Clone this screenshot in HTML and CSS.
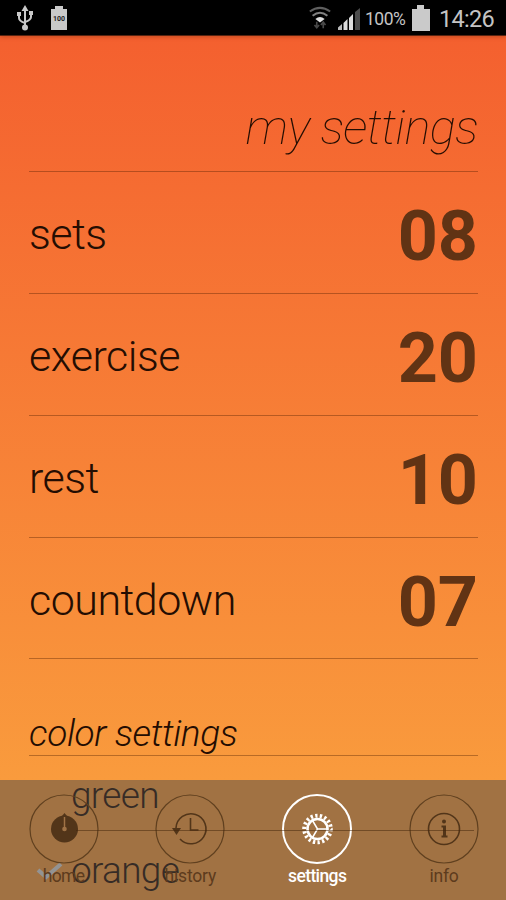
FILE: index.html
```html
<!DOCTYPE html>
<html lang="en">
<head>
<meta charset="utf-8">
<title>My settings</title>
<link rel="stylesheet" href="styles.css">
</head>
<body>
<div class="phone">
  <header class="status">
    <svg class="usb" width="18" height="26" viewBox="0 0 18 26" fill="none" stroke="#c9c9c9" stroke-width="2">
      <path d="M9 3v19M3 9v4q0 3 6 5M15 8v4q0 3-6 5"/>
      <path d="M5.500 6 9 0l3.500 6zM1 7h4v4H1zM13 6h4v4h-4z" fill="#c9c9c9" stroke="none"/>
      <circle cx="9" cy="22.500" r="3" fill="#c9c9c9" stroke="none"/>
    </svg>
    <span class="charge">100</span>
    <div class="status-right">
      <svg class="wifi" width="24" height="26" viewBox="0 0 26 26" fill="none" stroke="#5f5f5f" stroke-width="2.200">
        <path d="M2 6q11-8 22 0"/><path d="M5 10.500q8-6.500 16 0" stroke="#808080"/>
        <path d="M8 14q5-4 10 0l-5 4z" fill="#ddd" stroke="none"/>
        <path d="M9.500 17v6M7 20.500l2.500 3 2.500-3M16.500 24v-6M14 20.500l2.500-3 2.500 3" stroke="#484848" stroke-width="1.800"/>
      </svg>
      <svg class="signal" width="24" height="24" viewBox="0 0 24 24" fill="#ddd">
        <path d="M1 20.500 5 17v6H1z" fill="#bbb"/><path d="M6.500 16l4-4v11h-4zM12 11l4-4v16h-4z"/><path d="M18 5l5-4v22h-5z" fill="#4b4b4b"/>
      </svg>
      <span class="percent">100%</span>
      <svg class="battery" width="18" height="26" viewBox="0 0 18 26"><path d="M0 4h5V0h7v4h6v22H0z" fill="#cacaca"/></svg>
      <span class="clock">14:26</span>
    </div>
  </header>

  <main class="content">
    <h1>my settings</h1>
    <div class="row"><span class="label">sets</span><span class="value">08</span></div>
    <div class="row"><span class="label">exercise</span><span class="value">20</span></div>
    <div class="row"><span class="label">rest</span><span class="value">10</span></div>
    <div class="row last"><span class="label">countdown</span><span class="value">07</span></div>
    <h2>color settings</h2>
    <ul class="colors">
      <li>green</li>
      <li class="checked">
        <svg class="check" width="28" height="20" viewBox="0 0 28 20"><path d="M2 8l8 7L25 2" fill="none" stroke="#ddd" stroke-width="4"/></svg>orange</li>
    </ul>
  </main>

  <nav class="tabs">
    <a class="tab home">
      <svg viewBox="0 0 72 72"><circle class="ring" cx="36" cy="36" r="34"/>
        <circle cx="36.500" cy="36" r="13.500" fill="#523519"/><path d="M34 23l2.500-3 2.500 3z" fill="#523519"/>
        <path d="M36.500 24v12" stroke="#a07346" stroke-width="1.500"/><circle cx="36.500" cy="36" r="2.300" fill="#a07346"/></svg>
      <span>home</span>
    </a>
    <a class="tab">
      <svg viewBox="0 0 72 72"><circle class="ring" cx="36" cy="36" r="34"/>
        <path class="line" d="M22 35a15 15 0 1 1 4 11M36.500 25v12h8"/><path d="M18 35h9l-4.500 7z" fill="#523519"/></svg>
      <span>history</span>
    </a>
    <a class="tab active">
      <svg viewBox="0 0 72 72"><circle class="ring" cx="36" cy="36" r="34"/>
        <circle class="teeth" cx="36.500" cy="36" r="13.300" pathLength="72"/>
        <circle class="wheel" cx="36.500" cy="36" r="10"/>
        <path class="line" d="M36.500 36H46M36.500 36l-5-8.500M36.500 36l-5 8.500"/></svg>
      <span>settings</span>
    </a>
    <a class="tab">
      <svg viewBox="0 0 72 72"><circle class="ring" cx="36" cy="36" r="34"/>
        <circle class="line" cx="36" cy="36" r="15.500"/><circle cx="36" cy="28.500" r="2" fill="#523519"/>
        <path d="M33.500 32.500h4.500v10h1.500v2h-6v-2H35v-8h-1.500z" fill="#523519"/></svg>
      <span>info</span>
    </a>
  </nav>
</div>
</body>
</html>
```
FILE: styles.css
```css
* { box-sizing: border-box; }
body { margin: 0; background: #000; font-family: Roboto, "Liberation Sans", sans-serif; }
.phone {
  position: relative;
  width: 506px;
  height: 900px;
  overflow: hidden;
  background: linear-gradient(#f4602f 36px, #f99b3d 780px);
  color: #240d02;
}
.status {
  display: flex;
  align-items: center;
  height: 36px;
  padding: 0 12px 0 16px;
  background: #000;
  border-bottom: 1px solid #5a2410;
  box-shadow: 0 1px 4px rgba(120, 40, 10, 0.4);
  color: #c4c4c4;
}
.charge {
  position: relative;
  width: 16px;
  height: 21px;
  margin: 3px 0 0 17px;
  background: #c9c9c9;
  color: #222;
  font-size: 7px;
  font-weight: 700;
  line-height: 20px;
  text-align: center;
}
.charge::before {
  content: "";
  position: absolute;
  left: 4px;
  top: -3px;
  width: 8px;
  height: 3px;
  background: #c9c9c9;
}
.status-right { display: flex; align-items: center; margin-left: auto; }
.wifi { margin-right: 5px; }
.signal { margin: 2px 4px 0 0; }
.percent { width: 42px; margin: 2px 5px 0 0; font-size: 17.5px; letter-spacing: -0.5px; white-space: nowrap; }
.battery { margin-right: 9px; }
.clock { margin-top: 2px; font-size: 23.5px; width: 55px; letter-spacing: -0.7px; }
.content { padding: 0 28px 0 29px; }
h1, h2 { margin: 0; border-bottom: 1px solid rgba(80, 30, 0, 0.38); font-style: italic; }
h1 {
  height: 136px;
  padding-top: 62px;
  font-size: 49px;
  font-weight: 100;
  line-height: 60px;
  letter-spacing: -0.7px;
  text-align: right;
}
.row {
  display: flex;
  justify-content: space-between;
  height: 122px;
  padding-top: 20px;
  border-bottom: 1px solid rgba(80, 30, 0, 0.38);
  line-height: 84px;
}
.row.last { height: 121px; }
.label { font-size: 43px; font-weight: 300; letter-spacing: -0.5px; }
.value { padding-top: 2px; font-size: 70px; font-weight: 700; color: #613314; }
h2 {
  height: 97px;
  padding-top: 52px;
  font-size: 37px;
  font-weight: 300;
  line-height: 46px;
  letter-spacing: -0.35px;
}
.colors { margin: 0; padding: 2px 0 0 42px; list-style: none; font-size: 37px; font-weight: 300; line-height: 76px; letter-spacing: -0.7px; }
.colors li { position: relative; height: 75px; }
.check { position: absolute; left: -35px; top: 29px; }
.tabs {
  position: absolute;
  left: 0;
  right: 0;
  bottom: 0;
  height: 120px;
  display: flex;
  justify-content: space-between;
  padding: 12.5px 26px 0 27.5px;
  background: rgba(73, 73, 73, 0.5);
}
.tabs::before {
  content: "";
  position: absolute;
  left: 76px;
  right: 32px;
  top: 50px;
  height: 1px;
  background: rgba(65, 35, 10, 0.5);
}
.tab { display: flex; flex-direction: column; align-items: center; width: 72px; color: #5d3b1d; font-size: 17.5px; line-height: 22px; letter-spacing: -0.2px; }
.tab svg { width: 72px; height: 72px; }
.home span { letter-spacing: -0.7px; }
.ring { fill: none; stroke: #60401f; stroke-width: 1.2; }
.line { fill: none; stroke: #523519; stroke-width: 1.6; }
.active { color: #fff; font-weight: 500; letter-spacing: -0.6px; }
.active .ring { stroke: #fff; stroke-width: 2; }
.active .line { stroke: #fff; stroke-width: 1.5; }
.wheel { fill: none; stroke: #fff; stroke-width: 2.6; }
.teeth { fill: none; stroke: #fff; stroke-width: 4; stroke-dasharray: 2 2; }
```
